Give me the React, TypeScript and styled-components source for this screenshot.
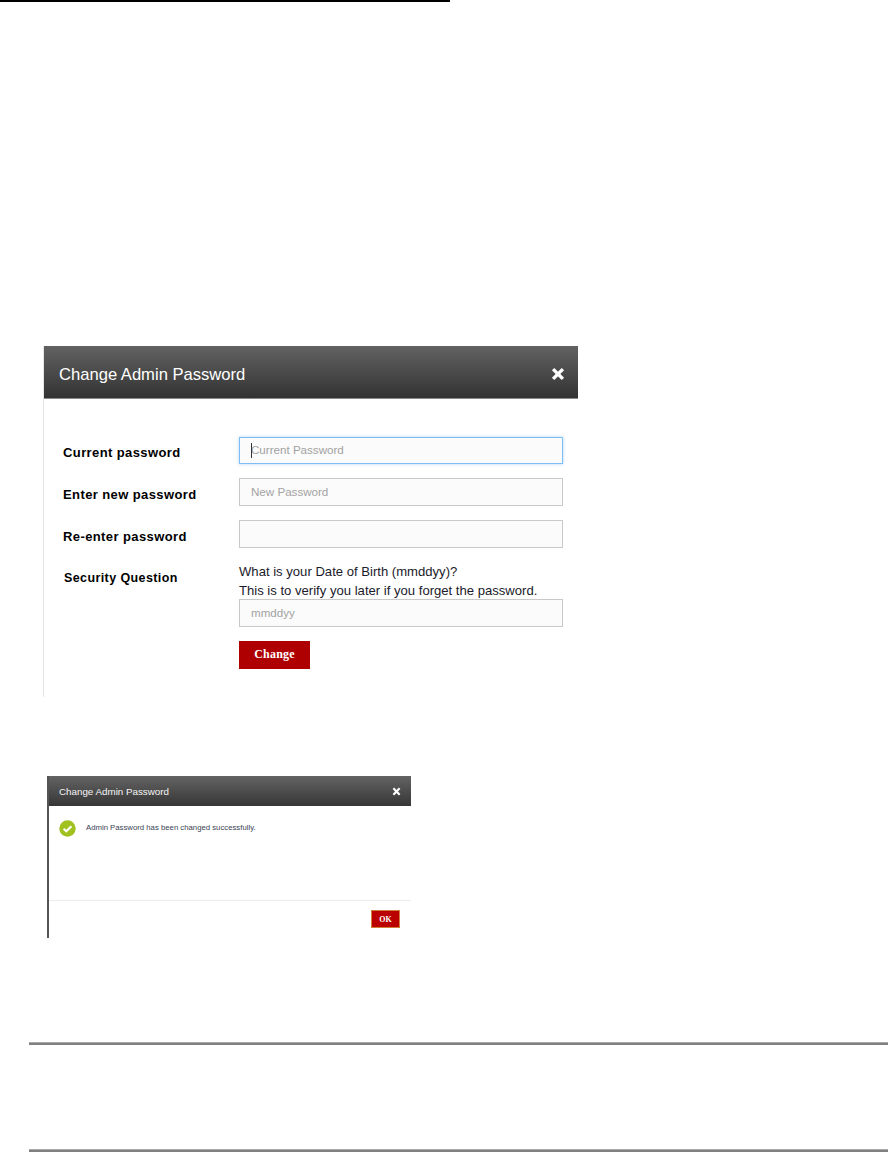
import React, { FC } from "react";
import styled, { createGlobalStyle } from "styled-components";

const GlobalStyle = createGlobalStyle`
  html, body {
    margin: 0;
    padding: 0;
    background: #fff;
    font-family: "Liberation Sans", Arial, sans-serif;
  }
`;

const CloseIcon: FC<{ size: number }> = ({ size }) => (
  <svg width={size} height={size} viewBox="0 0 12 12" aria-hidden="true">
    <path d="M1.8 1.8 L10.2 10.2 M10.2 1.8 L1.8 10.2" stroke="#fff" strokeWidth="2.9" fill="none" />
  </svg>
);

const CheckBadge: FC = () => (
  <svg width="17" height="17" viewBox="0 0 17 17" aria-hidden="true">
    <circle cx="8.5" cy="8.5" r="8.2" fill="#a0c11f" />
    <path d="M4.6 8.8 L7.3 11.3 L12.4 6.2" stroke="#fff" strokeWidth="2.2" fill="none" />
  </svg>
);

const fields = [
  { label: "Current password", placeholder: "Current Password", focused: true },
  { label: "Enter new password", placeholder: "New Password" },
  { label: "Re-enter password", placeholder: "" },
];

const App: FC = () => {
  return (
    <Page>
      <GlobalStyle />
      <TopRule />

      <FormDialog>
        <FormHeader>
          <FormTitle>Change Admin Password</FormTitle>
          <FormClose>
            <CloseIcon size={14} />
          </FormClose>
        </FormHeader>
        <FormBody>
          {fields.map((f) => (
            <FieldRow key={f.label} $focused={f.focused}>
              <FieldLabel $focused={f.focused}>{f.label}</FieldLabel>
              <InputWrap>
                <TextInput placeholder={f.placeholder} $focused={f.focused} readOnly />
                {f.focused && <Caret />}
              </InputWrap>
            </FieldRow>
          ))}
          <QuestionRow>
            <QuestionLabel>Security Question</QuestionLabel>
            <QuestionColumn>
              <QuestionText>
                What is your Date of Birth (mmddyy)?
                <br />
                This is to verify you later if you forget the password.
              </QuestionText>
              <AnswerWrap>
                <TextInput placeholder="mmddyy" readOnly />
              </AnswerWrap>
              <ChangeButton type="button">Change</ChangeButton>
            </QuestionColumn>
          </QuestionRow>
        </FormBody>
      </FormDialog>

      <NoticeDialog>
        <NoticeHeader>
          <NoticeTitle>Change Admin Password</NoticeTitle>
          <CloseIcon size={9} />
        </NoticeHeader>
        <NoticeBody>
          <CheckBadge />
          <NoticeText>Admin Password has been changed successfully.</NoticeText>
        </NoticeBody>
        <NoticeFooter>
          <OkButton type="button">OK</OkButton>
        </NoticeFooter>
      </NoticeDialog>

      <FooterRules>
        <Rule />
        <Rule />
      </FooterRules>
    </Page>
  );
};

export default App;

const Page = styled.div`
  width: 888px;
  height: 1153px;
  overflow: hidden;
  background: #fff;
`;
const TopRule = styled.div`
  width: 450px;
  height: 2px;
  background: #000;
`;
const FormDialog = styled.section`
  width: 534px;
  height: 351px;
  margin: 344px 0 0 43px;
  border-left: 1px solid #e6e6e6;
`;
const FormHeader = styled.header`
  height: 53px;
  box-sizing: border-box;
  display: flex;
  align-items: center;
  justify-content: space-between;
  padding: 6px 13px 0 15px;
  background: linear-gradient(#626262, #333);
  border-bottom: 1px solid #8a8a8a;
`;
const FormTitle = styled.h2`
  margin: 0;
  font-size: 16.6px;
  font-weight: 400;
  color: #fff;
`;
const FormClose = styled.span`
  display: flex;
  margin-top: -2px;
`;
const FormBody = styled.div`
  display: flex;
  flex-direction: column;
  gap: 14px;
  padding: 38px 15px 0 19px;
`;
const FieldRow = styled.div<{ $focused?: boolean }>`
  display: flex;
  align-items: center;
  height: ${(p) => (p.$focused ? "27px" : "28px")};
`;
const FieldLabel = styled.label<{ $focused?: boolean }>`
  width: 176px;
  padding-top: ${(p) => (p.$focused ? "3px" : "5px")};
  font-size: 13px;
  font-weight: 700;
  letter-spacing: 0.4px;
  color: #000;
`;
const InputWrap = styled.div`
  position: relative;
  width: 324px;
  height: 100%;
`;
const AnswerWrap = styled.div`
  width: 324px;
  height: 28px;
`;
const TextInput = styled.input<{ $focused?: boolean }>`
  display: block;
  width: 100%;
  height: 100%;
  box-sizing: border-box;
  padding: 0 11px 2px 11px;
  outline: none;
  font-family: "Liberation Sans", Arial, sans-serif;
  font-size: 11.6px;
  background: #fbfbfb;
  border: 1px solid ${(p) => (p.$focused ? "#7fbdf5" : "#c9c9c9")};
  box-shadow: ${(p) => (p.$focused ? "0 0 3px rgba(100, 170, 240, 0.5)" : "none")};
  &::placeholder {
    color: #a2a2a2;
    opacity: 1;
  }
`;
const Caret = styled.span`
  position: absolute;
  left: 12px;
  top: 6px;
  width: 1px;
  height: 15px;
  background: #333;
`;
const QuestionRow = styled.div`
  display: flex;
  align-items: flex-start;
  margin-top: 1px;
`;
const QuestionLabel = styled(FieldLabel)`
  padding: 8px 0 0 1px;
  width: 175px;
  font-size: 12.5px;
`;
const QuestionColumn = styled.div`
  width: 324px;
`;
const QuestionText = styled.p`
  margin: -1px 0 0;
  height: 37px;
  font-size: 13.1px;
  line-height: 19px;
  white-space: nowrap;
  color: #1a1a2a;
`;
const ChangeButton = styled.button`
  display: block;
  width: 71px;
  height: 28px;
  margin-top: 14px;
  padding: 0 0 2px;
  border: 0;
  background: #ae0000;
  color: #fff;
  font-family: "Liberation Serif", "Times New Roman", serif;
  font-size: 12px;
  font-weight: 700;
  letter-spacing: 0.2px;
`;
const NoticeDialog = styled.section`
  width: 362px;
  height: 162px;
  margin: 79px 0 0 47px;
  border-left: 2px solid #555;
  display: flex;
  flex-direction: column;
`;
const NoticeHeader = styled.header`
  height: 30px;
  flex: none;
  box-sizing: border-box;
  display: flex;
  align-items: center;
  justify-content: space-between;
  padding: 0 10px 0 10px;
  background: linear-gradient(#636363, #363636);
`;
const NoticeTitle = styled.h3`
  margin: 0;
  font-size: 9.8px;
  font-weight: 400;
  color: #f4f4f4;
`;
const NoticeBody = styled.div`
  height: 95px;
  flex: none;
  box-sizing: border-box;
  display: flex;
  align-items: flex-start;
  gap: 10px;
  padding: 14px 0 0 10px;
  border-bottom: 1px solid #ececec;
`;
const NoticeText = styled.p`
  margin: 3px 0 0;
  font-size: 7.75px;
  line-height: 10px;
  color: #3a3f55;
`;
const NoticeFooter = styled.div`
  display: flex;
  justify-content: flex-end;
  padding: 9px 11px 0 0;
`;
const OkButton = styled.button`
  width: 29px;
  height: 18px;
  padding: 0;
  box-sizing: border-box;
  background: #bb0000;
  border: 1px solid #d0803a;
  color: #fff;
  font-family: "Liberation Serif", "Times New Roman", serif;
  font-size: 8px;
  font-weight: 700;
`;
const FooterRules = styled.div`
  margin: 104px 0 0 29px;
  display: flex;
  flex-direction: column;
  gap: 104px;
`;
const Rule = styled.div`
  height: 3px;
  box-sizing: border-box;
  border-top: 1px solid #a8a8a8;
  background: #808080;
`;
